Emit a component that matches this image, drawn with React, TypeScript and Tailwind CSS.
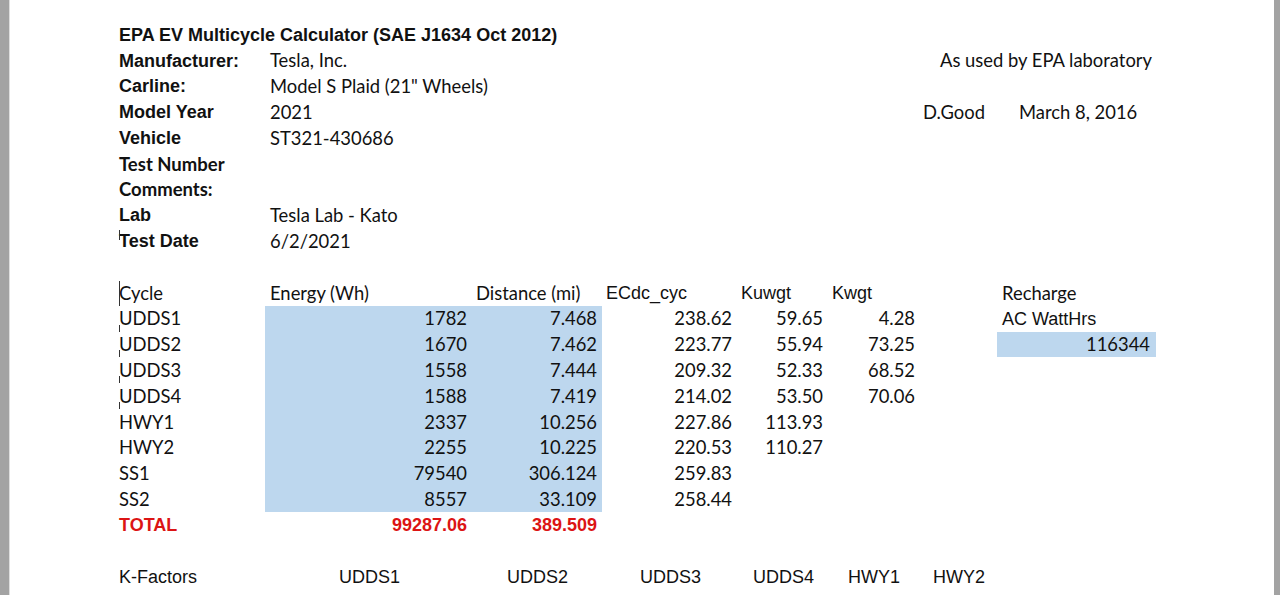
import React from "react";

const arial = "font-['Liberation_Sans',Arial,sans-serif] text-[18px]";
const cal = "font-['Lato',sans-serif] text-[18.4px]";
const red = "text-[#dc1414]";
const cols = "grid grid-cols-[151px_207px_130px_135px_91px_92px_77px_159px] grid-rows-[25.8px] h-[25.8px] items-center leading-none whitespace-nowrap text-[#111]";
const blue = "bg-[#bdd7ee]";

const infoRows: { label: string; value?: string; bold?: string }[] = [
  { label: "Manufacturer:", value: "Tesla, Inc." },
  { label: "Carline:", value: 'Model S Plaid (21" Wheels)' },
  { label: "Model Year", value: "2021" },
  { label: "Vehicle", value: "ST321-430686" },
  { label: "Test Number", bold: "cal" },
  { label: "Comments:", bold: "cal" },
  { label: "Lab", value: "Tesla Lab - Kato" },
  { label: "Test Date", value: "6/2/2021" },
];

const data = [
  ["UDDS1", "1782", "7.468", "238.62", "59.65", "4.28"],
  ["UDDS2", "1670", "7.462", "223.77", "55.94", "73.25"],
  ["UDDS3", "1558", "7.444", "209.32", "52.33", "68.52"],
  ["UDDS4", "1588", "7.419", "214.02", "53.50", "70.06"],
  ["HWY1", "2337", "10.256", "227.86", "113.93", ""],
  ["HWY2", "2255", "10.225", "220.53", "110.27", ""],
  ["SS1", "79540", "306.124", "259.83", "", ""],
  ["SS2", "8557", "33.109", "258.44", "", ""],
];

export default function App() {
  return (
    <div className="flex w-[1280px] h-[595px] overflow-hidden bg-white">
      <div className="w-[9px] bg-[#a3a3a3]" />
      <div className="w-[1px] bg-[#dedede]" />
      <div className="flex-1 pl-[104px] pt-[22px]">
        {/* title */}
        <div className={cols}>
          <div className={"px-[5px] font-bold text-[#111] " + arial}>
            EPA EV Multicycle Calculator (SAE J1634 Oct 2012)
          </div>
        </div>

        {infoRows.map((r, i) => {
          if (i === 0)
            return (
              <div key={i} className={cols}>
                <div className={"px-[5px] font-bold " + arial}>{r.label}</div>
                <div className={"px-[5px] " + cal}>{r.value}</div>
                <div className="col-span-6 flex justify-end pr-[4px]">
                  <span className={cal}>As used by EPA laboratory</span>
                </div>
              </div>
            );
          if (i === 2)
            return (
              <div key={i} className={cols}>
                <div className={"px-[5px] font-bold " + arial}>{r.label}</div>
                <div className={"px-[5px] " + cal}>{r.value}</div>
                <div />
                <div />
                <div />
                <div />
                <div className={"pl-[3px] " + cal}>D.Good</div>
                <div className={"pl-[22px] " + cal}>March 8, 2016</div>
              </div>
            );
          return (
            <div key={i} className={cols}>
              <div
                className={
                  "relative h-full flex items-center px-[5px] font-bold " +
                  (r.bold === "cal" ? "font-['Lato',sans-serif] text-[18.5px]" : arial)
                }
              >
                {r.label}
                {r.label === "Test Date" && (
                  <span className="absolute left-[5px] top-[2px] w-[1px] h-[10px] bg-[#333]" />
                )}
              </div>
              <div className={"px-[5px] " + cal}>{r.value}</div>
            </div>
          );
        })}

        {/* blank */}
        <div className={cols} />

        {/* header row */}
        <div className={cols}>
          <div className={"relative h-full flex items-center px-[5px] " + cal}>
            Cycle
            <span className="absolute left-[5px] top-[1px] w-[1px] h-[25px] bg-[#333]" />
          </div>
          <div className={"px-[5px] " + cal}>Energy (Wh)</div>
          <div className={"px-[4px] " + cal}>Distance (mi)</div>
          <div className={"px-[4px] " + arial}>ECdc_cyc</div>
          <div className={"px-[4px] " + arial}>Kuwgt</div>
          <div className={"px-[4px] " + arial}>Kwgt</div>
          <div />
          <div className={"px-[5px] " + cal}>Recharge</div>
        </div>

        {data.map((d, i) => (
          <div key={d[0]} className={cols}>
            <div className={"relative h-full flex items-center px-[5px] " + cal}>
              {d[0]}
              {i < 4 && (
                <span className="absolute left-[5px] bottom-[0px] w-[1px] h-[7px] bg-[#333]" />
              )}
            </div>
            <div className={"h-full flex items-center justify-end px-[5px] " + blue + " " + cal}>{d[1]}</div>
            <div className={"h-full flex items-center justify-end px-[5px] " + blue + " " + cal}>{d[2]}</div>
            <div className={"flex justify-end px-[5px] " + cal}>{d[3]}</div>
            <div className={"flex justify-end px-[5px] " + cal}>{d[4]}</div>
            <div className={"flex justify-end px-[5px] " + cal}>{d[5]}</div>
            <div />
            {i === 0 ? (
              <div className={"px-[5px] " + arial}>AC WattHrs</div>
            ) : i === 1 ? (
              <div className={"h-full flex items-center justify-end px-[6px] " + blue + " " + cal}>116344</div>
            ) : (
              <div />
            )}
          </div>
        ))}

        {/* total */}
        <div className={cols}>
          <div className={"px-[5px] font-bold " + red + " " + arial}>TOTAL</div>
          <div className={"flex justify-end px-[5px] font-bold " + red + " " + arial}>99287.06</div>
          <div className={"flex justify-end px-[5px] font-bold " + red + " " + arial}>389.509</div>
        </div>

        <div className={cols} />

        {/* k-factors */}
        <div className={cols}>
          <div className={"px-[5px] " + arial}>K-Factors</div>
          <div className={"pl-[74px] " + arial}>UDDS1</div>
          <div className={"pl-[35px] " + arial}>UDDS2</div>
          <div className={"pl-[38px] " + arial}>UDDS3</div>
          <div className={"pl-[16px] " + arial}>UDDS4</div>
          <div className={"pl-[20px] " + arial}>HWY1</div>
          <div className={"pl-[13px] " + arial}>HWY2</div>
        </div>
      </div>
      <div className="w-[6px] bg-[#a3a3a3]" />
    </div>
  );
}
